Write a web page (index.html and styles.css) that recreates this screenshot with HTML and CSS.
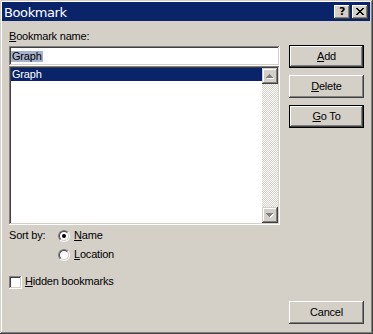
FILE: index.html
```html
<!DOCTYPE html>
<html>
<head>
<meta charset="utf-8">
<link rel="stylesheet" href="styles.css">
</head>
<body>
<div class="window">
  <div class="titlebar">
    <span class="title">Bookmark</span>
    <div class="tbtns">
      <span class="tbtn help">?</span>
      <span class="tbtn close"><svg width="8" height="7" viewBox="0 0 8 7" shape-rendering="crispEdges"><path fill="#000" d="M0 0h2v1H0zM6 0h2v1H6zM1 1h2v1H1zM5 1h2v1H5zM2 2h4v1H2zM3 3h2v1H3zM2 4h4v1H2zM1 5h2v1H1zM5 5h2v1H5zM0 6h2v1H0zM6 6h2v1H6z"/></svg></span>
    </div>
  </div>
  <div class="body">
    <div class="left">
      <div class="label"><u>B</u>ookmark name:</div>
      <div class="input"><span class="sel">Graph</span></div>
      <div class="list">
        <div class="items"><div class="item">Graph</div></div>
        <div class="scroll">
          <div class="sbtn"><svg width="8" height="5" viewBox="0 0 8 5" shape-rendering="crispEdges"><path fill="#fff" transform="translate(1 1)" d="M3 0h1v1h1v1h1v1h1v1H0V3h1V2h1V1h1z"/><path fill="#808080" d="M3 0h1v1h1v1h1v1h1v1H0V3h1V2h1V1h1z"/></svg></div>
          <div class="track"></div>
          <div class="sbtn"><svg width="8" height="5" viewBox="0 0 8 5" shape-rendering="crispEdges"><path fill="#fff" transform="translate(1 1)" d="M0 0h7v1h-1v1h-1v1h-1v1h-1V3H2V2H1V1H0z"/><path fill="#808080" d="M0 0h7v1h-1v1h-1v1h-1v1h-1V3H2V2H1V1H0z"/></svg></div>
        </div>
      </div>
      <div class="sort">
        <div class="sortlabel">Sort by:</div>
        <div class="radios">
          <div class="opt"><span class="radio"><span class="ri"><span class="dot"></span></span></span><span><u>N</u>ame</span></div>
          <div class="opt"><span class="radio"><span class="ri"></span></span><span><u>L</u>ocation</span></div>
        </div>
      </div>
      <div class="checkrow"><span class="cb"></span><span><u>H</u>idden bookmarks</span></div>
    </div>
    <div class="right">
      <button class="btn def"><u>A</u>dd</button>
      <button class="btn"><u>D</u>elete</button>
      <button class="btn def"><u>G</u>o To</button>
      <button class="btn cancel">Cancel</button>
    </div>
  </div>
</div>
</body>
</html>
```
FILE: styles.css
```css
body {
  margin: 0;
  font-family: "Liberation Sans", Arial, sans-serif;
  font-size: 11px;
  letter-spacing: -0.2px;
  color: #000;
}
u {
  text-underline-offset: 1px;
}
.window {
  width: 373px;
  height: 334px;
  box-sizing: border-box;
  background: #d4d0c8;
  padding: 2px 3px 3px 2px;
  box-shadow: inset -1px -1px #404040, inset 1px 1px #d4d0c8, inset -2px -2px #808080, inset 2px 2px #fff;
  display: flex;
  flex-direction: column;
}
.titlebar {
  height: 19px;
  flex: none;
  background: #0a246a;
  color: #fff;
  display: flex;
  justify-content: space-between;
  align-items: flex-start;
}
.title {
  font-family: "DejaVu Sans", sans-serif;
  font-size: 13px;
  letter-spacing: -0.4px;
  line-height: 17px;
  padding: 2px 0 0 2px;
}
.tbtns {
  display: flex;
  gap: 2px;
  margin: 3px 2px 0 0;
}
.tbtn {
  width: 16px;
  height: 14px;
  box-sizing: border-box;
  background: #d4d0c8;
  box-shadow: inset -1px -1px #404040, inset 1px 1px #fff, inset -2px -2px #808080, inset 2px 2px #d4d0c8;
  display: flex;
  align-items: center;
  justify-content: center;
  color: #000;
}
.help {
  font-family: "DejaVu Sans", sans-serif;
  font-weight: bold;
  font-size: 11px;
  line-height: 12px;
  padding-bottom: 1px;
}
.close svg {
  display: block;
  margin-bottom: 1px;
}
.body {
  flex: 1;
  display: flex;
  gap: 9px;
  padding: 9px 6px 7px 7px;
}
.left {
  width: 271px;
  display: flex;
  flex-direction: column;
}
.label {
  line-height: 13px;
  margin-bottom: 3px;
}
.input {
  height: 20px;
  box-sizing: border-box;
  background: #fff;
  box-shadow: inset -1px -1px #fff, inset 1px 1px #808080, inset -2px -2px #d4d0c8, inset 2px 2px #404040;
  padding: 5px 2px 0 2px;
}
.sel {
  display: inline-block;
  vertical-align: top;
  line-height: 11px;
  height: 11px;
  padding: 0 1px;
  background: #a6b2cb;
}
.list {
  height: 159px;
  box-sizing: border-box;
  background: #fff;
  box-shadow: inset -1px -1px #fff, inset 1px 1px #808080, inset -2px -2px #d4d0c8, inset 2px 2px #404040;
  padding: 2px;
  display: flex;
}
.items {
  flex: 1;
}
.item {
  background: #0a246a;
  color: #fff;
  line-height: 13px;
  padding-left: 1px;
}
.scroll {
  width: 16px;
  display: flex;
  flex-direction: column;
}
.sbtn {
  height: 16px;
  box-sizing: border-box;
  background: #d4d0c8;
  box-shadow: inset -1px -1px #404040, inset 1px 1px #d4d0c8, inset -2px -2px #808080, inset 2px 2px #fff;
  display: flex;
  align-items: center;
  justify-content: center;
}
.sbtn svg {
  display: block;
}
.track {
  flex: 1;
  background: repeating-conic-gradient(#d4d0c8 0 25%, #fff 0 50%) 0 0 / 2px 2px;
}
.sort {
  display: flex;
  margin-top: 2px;
}
.sortlabel {
  width: 49px;
  line-height: 17px;
}
.opt {
  display: flex;
  align-items: flex-start;
  height: 19px;
  line-height: 17px;
}
.radio {
  width: 12px;
  height: 12px;
  box-sizing: border-box;
  border-radius: 50%;
  border: 1px solid;
  border-color: #808080 #fff #fff #808080;
  margin: 3px 4px 0 0;
  flex: none;
}
.ri {
  display: flex;
  align-items: center;
  justify-content: center;
  width: 10px;
  height: 10px;
  box-sizing: border-box;
  border-radius: 50%;
  border: 1px solid;
  border-color: #404040 #d4d0c8 #d4d0c8 #404040;
  background: #fff;
}
.dot {
  width: 4px;
  height: 4px;
  border-radius: 50%;
  background: #000;
}
.checkrow {
  display: flex;
  align-items: flex-start;
  margin-top: 8px;
  line-height: 17px;
}
.cb {
  width: 13px;
  height: 13px;
  box-sizing: border-box;
  background: #fff;
  box-shadow: inset -1px -1px #fff, inset 1px 1px #808080, inset -2px -2px #d4d0c8, inset 2px 2px #404040;
  margin: 3px 3px 0 0;
  flex: none;
}
.right {
  width: 75px;
  display: flex;
  flex-direction: column;
  gap: 7px;
  padding-top: 15px;
}
.btn {
  height: 23px;
  box-sizing: border-box;
  font: inherit;
  letter-spacing: inherit;
  color: #000;
  background: #d4d0c8;
  border: none;
  padding: 0 0 1px 0;
  box-shadow: inset -1px -1px #404040, inset 1px 1px #fff, inset -2px -2px #808080, inset 2px 2px #d4d0c8;
}
.btn.def {
  border: 1px solid #000;
}
.cancel {
  margin-top: auto;
}
```
